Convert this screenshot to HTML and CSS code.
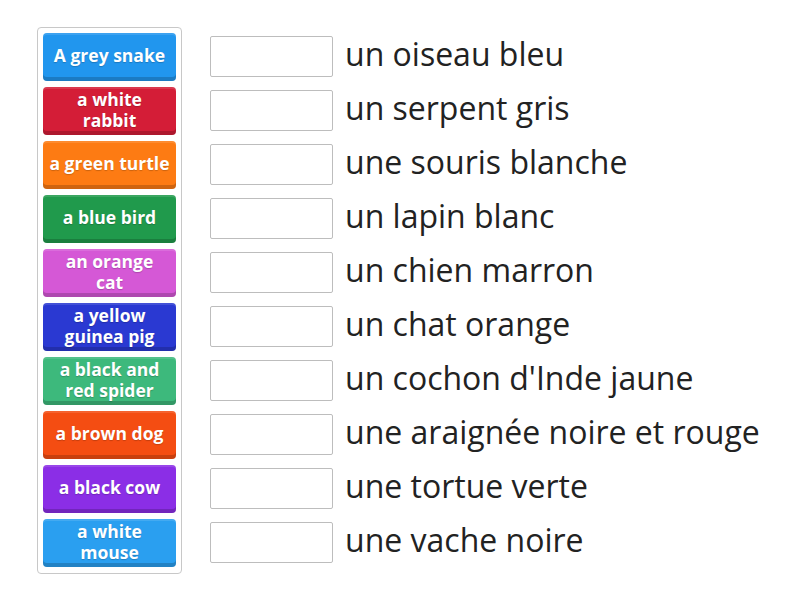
FILE: index.html
```html
<!DOCTYPE html>
<html>
<head>
<meta charset="utf-8">
<link rel="stylesheet" href="styles.css">
</head>
<body>
<div class="page">
  <div class="bank">
    <div class="tile c1">A grey snake</div>
    <div class="tile c2">a white<br>rabbit</div>
    <div class="tile c3">a green turtle</div>
    <div class="tile c4">a blue bird</div>
    <div class="tile c5">an orange<br>cat</div>
    <div class="tile c6">a yellow<br>guinea pig</div>
    <div class="tile c7">a black and<br>red spider</div>
    <div class="tile c8">a brown dog</div>
    <div class="tile c9">a black cow</div>
    <div class="tile c10">a white<br>mouse</div>
  </div>
  <div class="targets">
    <div class="row"><div class="slot"></div><div class="label">un oiseau bleu</div></div>
    <div class="row"><div class="slot"></div><div class="label">un serpent gris</div></div>
    <div class="row"><div class="slot"></div><div class="label">une souris blanche</div></div>
    <div class="row"><div class="slot"></div><div class="label">un lapin blanc</div></div>
    <div class="row"><div class="slot"></div><div class="label">un chien marron</div></div>
    <div class="row"><div class="slot"></div><div class="label">un chat orange</div></div>
    <div class="row"><div class="slot"></div><div class="label">un cochon d'Inde jaune</div></div>
    <div class="row"><div class="slot"></div><div class="label">une araignée noire et rouge</div></div>
    <div class="row"><div class="slot"></div><div class="label">une tortue verte</div></div>
    <div class="row"><div class="slot"></div><div class="label">une vache noire</div></div>
  </div>
</div>
</body>
</html>
```

FILE: styles.css
```css
html, body {
  margin: 0;
  padding: 0;
  background: #fff;
  font-family: "Open Sans", "Liberation Sans", sans-serif;
}
.page {
  display: flex;
  align-items: flex-start;
  padding: 27px 0 0 37px;
}
.bank {
  width: 133px;
  padding: 5px 5px 6px 5px;
  border: 1px solid #c8c8c8;
  border-radius: 4px;
  display: flex;
  flex-direction: column;
  gap: 6px;
}
.tile {
  height: 48px;
  box-sizing: border-box;
  border-radius: 4px;
  display: flex;
  align-items: center;
  justify-content: center;
  text-align: center;
  color: #fff;
  font-weight: 700;
  font-size: 17.5px;
  line-height: 21px;
  padding-bottom: 3px;
  white-space: nowrap;
  text-shadow: 0 1px 1px rgba(0,0,0,0.2);
  box-shadow: inset 0 -4px 0 rgba(0,0,0,0.18), inset 0 2px 0 rgba(255,255,255,0.12);
}
.c1 { background: #2196ee; }
.c2 { background: #d41d37; }
.c3 { background: #fd7b13; }
.c4 { background: #209a4c; }
.c5 { background: #d558d6; }
.c6 { background: #2a39d2; }
.c7 { background: #3db97c; }
.c8 { background: #f44d12; }
.c9 { background: #8b2ee6; }
.c10 { background: #2a9ff0; }
.targets {
  margin-left: 28px;
  margin-top: 9px;
  display: flex;
  flex-direction: column;
  gap: 13px;
}
.row {
  display: flex;
  align-items: center;
  height: 41px;
}
.slot {
  width: 123px;
  height: 41px;
  box-sizing: border-box;
  border: 1px solid #bdbdbd;
  border-radius: 2px;
  background: #fff;
}
.label {
  margin-left: 12px;
  font-size: 32px;
  color: #222;
  line-height: 41px;
  position: relative;
  top: -3px;
  white-space: nowrap;
}
```
